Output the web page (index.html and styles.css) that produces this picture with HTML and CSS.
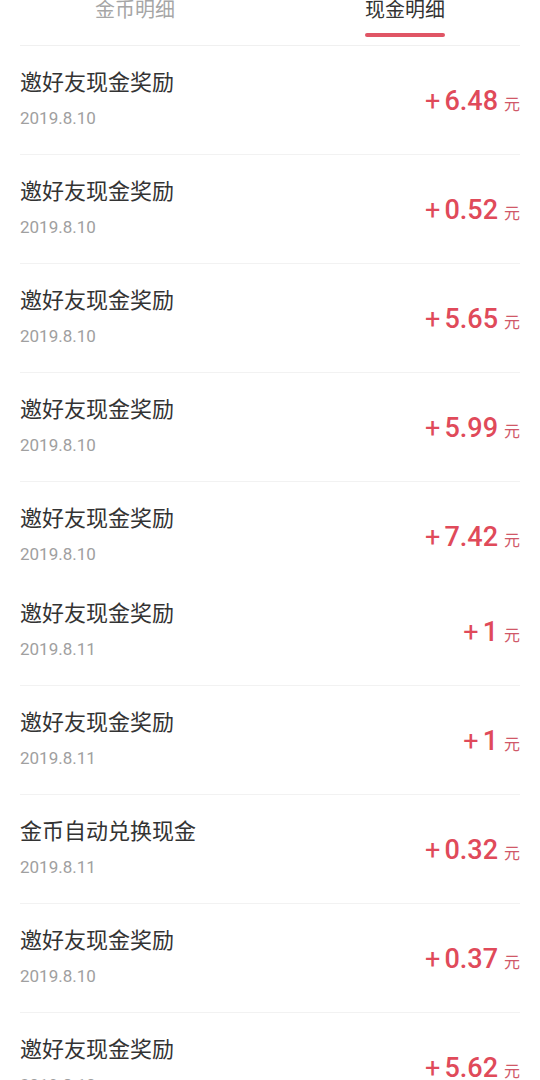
FILE: index.html
```html
<!DOCTYPE html>
<html lang="zh-CN">
<head>
  <meta charset="UTF-8" />
  <meta name="viewport" content="width=device-width, initial-scale=1.0"/>
  <title>现金明细</title>
  <link rel="stylesheet" href="styles.css">
</head>
<body>
  <div class="tabs">
    <div class="tab">金币明细</div>
    <div class="tab active">现金明细</div>
  </div>

  <ul class="list">
    <li class="row">
      <div class="info">
        <div class="title">邀好友现金奖励</div>
        <div class="date">2019.8.10</div>
      </div>
      <div class="amount"><span class="plus">+</span><span class="num">6.48</span><span class="unit">元</span></div>
    </li>
    <li class="row">
      <div class="info">
        <div class="title">邀好友现金奖励</div>
        <div class="date">2019.8.10</div>
      </div>
      <div class="amount"><span class="plus">+</span><span class="num">0.52</span><span class="unit">元</span></div>
    </li>
    <li class="row">
      <div class="info">
        <div class="title">邀好友现金奖励</div>
        <div class="date">2019.8.10</div>
      </div>
      <div class="amount"><span class="plus">+</span><span class="num">5.65</span><span class="unit">元</span></div>
    </li>
    <li class="row">
      <div class="info">
        <div class="title">邀好友现金奖励</div>
        <div class="date">2019.8.10</div>
      </div>
      <div class="amount"><span class="plus">+</span><span class="num">5.99</span><span class="unit">元</span></div>
    </li>
    <li class="row short">
      <div class="info">
        <div class="title">邀好友现金奖励</div>
        <div class="date">2019.8.10</div>
      </div>
      <div class="amount"><span class="plus">+</span><span class="num">7.42</span><span class="unit">元</span></div>
    </li>
    <li class="row">
      <div class="info">
        <div class="title">邀好友现金奖励</div>
        <div class="date">2019.8.11</div>
      </div>
      <div class="amount"><span class="plus">+</span><span class="num">1</span><span class="unit">元</span></div>
    </li>
    <li class="row">
      <div class="info">
        <div class="title">邀好友现金奖励</div>
        <div class="date">2019.8.11</div>
      </div>
      <div class="amount"><span class="plus">+</span><span class="num">1</span><span class="unit">元</span></div>
    </li>
    <li class="row">
      <div class="info">
        <div class="title">金币自动兑换现金</div>
        <div class="date">2019.8.11</div>
      </div>
      <div class="amount"><span class="plus">+</span><span class="num">0.32</span><span class="unit">元</span></div>
    </li>
    <li class="row">
      <div class="info">
        <div class="title">邀好友现金奖励</div>
        <div class="date">2019.8.10</div>
      </div>
      <div class="amount"><span class="plus">+</span><span class="num">0.37</span><span class="unit">元</span></div>
    </li>
    <li class="row">
      <div class="info">
        <div class="title">邀好友现金奖励</div>
        <div class="date">2019.8.10</div>
      </div>
      <div class="amount"><span class="plus">+</span><span class="num">5.62</span><span class="unit">元</span></div>
    </li>
  </ul>
</body>
</html>
```

FILE: styles.css
```css
body {
  margin: 0;
  background: #fff;
  font-family: Roboto, "Noto Sans CJK SC", sans-serif;
  color: #333;
  overflow: hidden;
}
.tabs {
  display: flex;
  height: 45px;
}
.tab {
  flex: 1;
  display: flex;
  flex-direction: column;
  align-items: center;
  font-size: 20px;
  line-height: 20px;
  color: #a6a6a6;
}
.tab.active {
  color: #333;
}
.tab.active::after {
  content: "";
  width: 80px;
  height: 4px;
  margin-top: 13px;
  border-radius: 2px;
  background: #e05565;
}
.list {
  list-style: none;
  margin: 0;
  padding: 0 20px;
}
.row {
  display: flex;
  align-items: center;
  justify-content: space-between;
  padding: 22px 0 24px;
  border-bottom: 1px solid #f2f2f2;
}
.row:first-child {
  border-top: 1px solid #f0f0f0;
}
.row.short {
  padding-bottom: 11px;
  border-bottom: none;
}
.title {
  font-size: 22px;
  line-height: 30px;
  color: #333;
}
.date {
  margin-top: 8px;
  font-size: 17px;
  line-height: 24px;
  color: #a0a0a0;
}
.amount {
  padding-top: 4px;
  font-size: 27px;
  font-weight: 500;
  color: #e04a5a;
  display: flex;
  align-items: baseline;
}
.plus {
  font-weight: 400;
}
.num {
  margin-left: 4px;
}
.unit {
  margin-left: 6px;
  font-size: 16px;
  font-weight: 400;
  color: #d05868;
}
```
